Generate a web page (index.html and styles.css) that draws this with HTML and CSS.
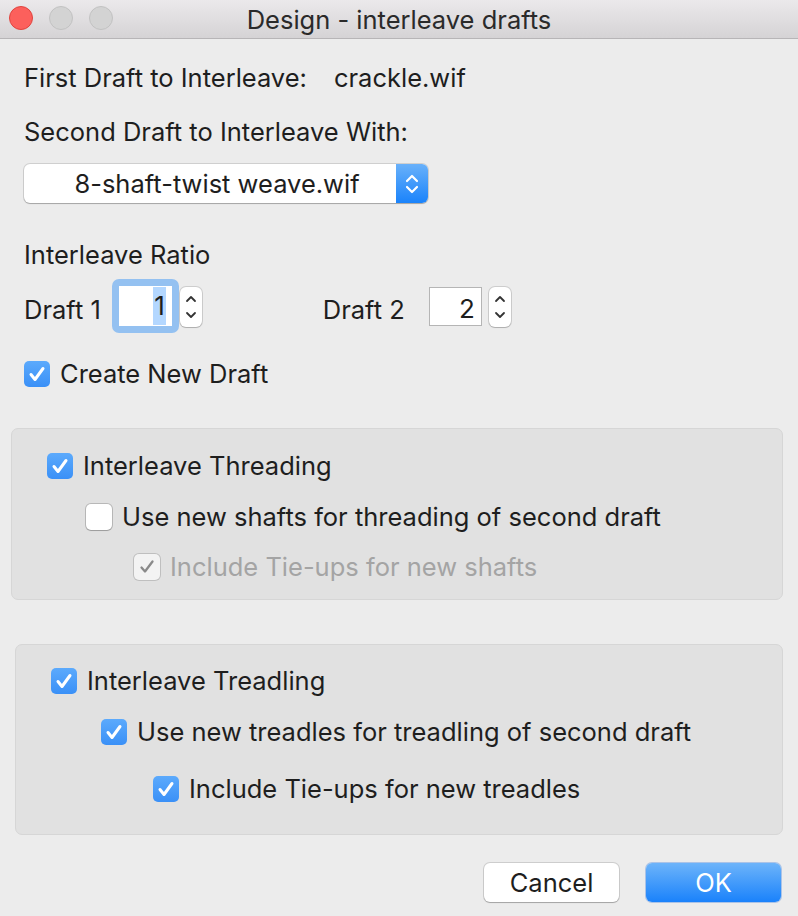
FILE: index.html
```html
<!DOCTYPE html>
<html>
<head>
<meta charset="utf-8">
<link rel="stylesheet" href="styles.css">
</head>
<body>
<div class="window">
  <div class="titlebar">
    <div class="lights">
      <span class="light red"></span>
      <span class="light gray"></span>
      <span class="light gray"></span>
    </div>
    <div class="title">Design - interleave drafts</div>
  </div>
  <div class="content">
    <div class="row first">
      <span class="first-label">First Draft to Interleave:</span>
      <span class="first-value">crackle.wif</span>
    </div>
    <div class="row second">Second Draft to Interleave With:</div>
    <div class="popup">
      <span class="popup-text">8-shaft-twist weave.wif</span>
      <span class="popup-arrows">
        <svg width="16" height="24" viewBox="0 0 16 24"><path d="M3 9 L8 4 L13 9 M3 15 L8 20 L13 15" fill="none" stroke="#fff" stroke-width="2.2" stroke-linecap="round" stroke-linejoin="round"/></svg>
      </span>
    </div>
    <div class="row ratio-label">Interleave Ratio</div>
    <div class="ratio">
      <span class="ratio-text">Draft 1</span>
      <span class="focus-ring"><span class="field focused"><span class="sel">1</span></span></span>
      <span class="stepper">
        <svg width="14" height="32" viewBox="0 0 14 32"><path d="M3 10 L7 6 L11 10 M3 22 L7 26 L11 22" fill="none" stroke="#333" stroke-width="1.8" stroke-linecap="round" stroke-linejoin="round"/></svg>
      </span>
      <span class="ratio-text d2">Draft 2</span>
      <span class="field plain">2</span>
      <span class="stepper s2">
        <svg width="14" height="32" viewBox="0 0 14 32"><path d="M3 10 L7 6 L11 10 M3 22 L7 26 L11 22" fill="none" stroke="#333" stroke-width="1.8" stroke-linecap="round" stroke-linejoin="round"/></svg>
      </span>
    </div>
    <div class="row check-row create">
      <span class="cb on"><svg width="20" height="18" viewBox="0 0 20 18"><path d="M4 9.5 L8 14.5 L16 3.5" fill="none" stroke="#fff" stroke-width="3" stroke-linecap="round" stroke-linejoin="round"/></svg></span>
      <span>Create New Draft</span>
    </div>

    <div class="group g1">
      <div class="row check-row">
        <span class="cb on"><svg width="20" height="18" viewBox="0 0 20 18"><path d="M4 9.5 L8 14.5 L16 3.5" fill="none" stroke="#fff" stroke-width="3" stroke-linecap="round" stroke-linejoin="round"/></svg></span>
        <span>Interleave Threading</span>
      </div>
      <div class="row check-row g1-r2">
        <span class="cb off"></span>
        <span>Use new shafts for threading of second draft</span>
      </div>
      <div class="row check-row g1-r3 disabled">
        <span class="cb dis"><svg width="20" height="18" viewBox="0 0 20 18"><path d="M4.5 9.5 L8 13.5 L15.5 3.5" fill="none" stroke="#8a8a8a" stroke-width="2.3" stroke-linecap="round" stroke-linejoin="round"/></svg></span>
        <span>Include Tie-ups for new shafts</span>
      </div>
    </div>

    <div class="group g2">
      <div class="row check-row">
        <span class="cb on"><svg width="20" height="18" viewBox="0 0 20 18"><path d="M4 9.5 L8 14.5 L16 3.5" fill="none" stroke="#fff" stroke-width="3" stroke-linecap="round" stroke-linejoin="round"/></svg></span>
        <span>Interleave Treadling</span>
      </div>
      <div class="row check-row g2-r2">
        <span class="cb on"><svg width="20" height="18" viewBox="0 0 20 18"><path d="M4 9.5 L8 14.5 L16 3.5" fill="none" stroke="#fff" stroke-width="3" stroke-linecap="round" stroke-linejoin="round"/></svg></span>
        <span>Use new treadles for treadling of second draft</span>
      </div>
      <div class="row check-row g2-r3">
        <span class="cb on"><svg width="20" height="18" viewBox="0 0 20 18"><path d="M4 9.5 L8 14.5 L16 3.5" fill="none" stroke="#fff" stroke-width="3" stroke-linecap="round" stroke-linejoin="round"/></svg></span>
        <span>Include Tie-ups for new treadles</span>
      </div>
    </div>

    <div class="buttons">
      <button class="btn cancel">Cancel</button>
      <button class="btn ok">OK</button>
    </div>
  </div>
</div>
</body>
</html>
```
FILE: styles.css
```css
* { box-sizing: border-box; }
html, body { margin: 0; padding: 0; }
body {
  width: 798px;
  height: 916px;
  background: #ececec;
  font-family: Inter, "Noto Sans", "Liberation Sans", sans-serif;
  font-size: 25.5px;
  color: #1e1e1e;
  overflow: hidden;
}
.window { width: 798px; height: 916px; background: #ececec; }
.titlebar {
  position: relative;
  height: 39px;
  background: linear-gradient(#ebe9eb, #d5d3d5);
  border-bottom: 1px solid #b7b5b7;
  display: flex;
  align-items: center;
  justify-content: center;
}
.lights {
  position: absolute;
  left: 9px;
  top: 6px;
  display: flex;
  gap: 16px;
}
.light {
  width: 24px; height: 24px; border-radius: 50%;
  display: block;
}
.light.red { background: #fc605c; border: 1px solid #e0443e; }
.light.gray { background: #d3d3d3; border: 1px solid #c2c2c2; }
.title { font-size: 25.5px; color: #2a2a2a; padding-top: 1px; }

.content { padding: 0 15px 0 24px; display: flex; flex-direction: column; }
.row { height: 30px; line-height: 30px; white-space: nowrap; }
.first { margin-top: 24px; display: flex; }
.first-value { margin-left: 27px; }
.second { margin-top: 24px; }
.popup {
  margin-top: 17px;
  width: 404px;
  height: 39px;
  background: #fff;
  border-radius: 6px;
  box-shadow: 0 0 0 1px rgba(0,0,0,0.12), 0 1px 1px rgba(0,0,0,0.2);
  display: flex;
  overflow: hidden;
}
.popup-text { flex: 1; text-align: center; line-height: 39px; padding-left: 14px; }
.popup-arrows {
  width: 32px;
  background: linear-gradient(#69b1fa, #1a83fb);
  display: flex; align-items: center; justify-content: center;
}
.ratio-label { margin-top: 37px; }
.ratio { margin-top: 9px; height: 54px; display: flex; align-items: center; }
.ratio-text { padding-top: 6px; }
.focus-ring {
  margin-left: 11px;
  width: 67px; height: 54px;
  background: #94c1f1;
  border-radius: 7px;
  padding: 7px;
  display: flex;
  flex: none;
}
.field {
  background: #fff;
  display: flex; align-items: center; justify-content: flex-end;
  font-size: 26px;
  flex: none;
}
.field.focused { width: 53px; height: 40px; padding-right: 6px; }
.sel { background: #b3d7ff; padding: 0 1px; line-height: 38px; }
.field.plain {
  margin-left: 24px;
  width: 53px; height: 39px;
  border: 1px solid #b5b5b5;
  padding-right: 6px;
  padding-top: 5px;
}
.stepper {
  width: 22px; height: 40px;
  background: #fff;
  border-radius: 6px;
  box-shadow: 0 0 0 1px rgba(0,0,0,0.13), 0 1px 1px rgba(0,0,0,0.15);
  display: flex; align-items: center; justify-content: center;
  margin-left: 1px;
  margin-top: 2px;
  flex: none;
}
.stepper.s2 { margin-left: 7px; }
.d2 { margin-left: 121px; }

.check-row { display: flex; align-items: center; }
.cb {
  width: 26px; height: 26px;
  border-radius: 5px;
  margin-right: 10px;
  display: flex; align-items: center; justify-content: center;
  flex: none;
}
.cb.on { background: linear-gradient(#5caafc, #3a90f7); }
.cb.off { background: #fff; box-shadow: 0 0 0 1px rgba(0,0,0,0.18), 0 1px 1px rgba(0,0,0,0.15); }
.cb.dis { background: #f3f3f3; box-shadow: 0 0 0 1px rgba(0,0,0,0.15); }
.disabled { color: #a4a4a4; }
.create { margin-top: 26px; }

.group {
  background: #e1e1e1;
  border: 1px solid #d6d6d6;
  border-radius: 7px;
  display: flex; flex-direction: column;
}
.g1 {
  margin-top: 39px;
  margin-left: -13px;
  height: 172px;
  padding: 22px 0 0 35px;
}
.g1-r2 { margin-top: 21px; margin-left: 39px; }
.g1-r3 { margin-top: 20px; margin-left: 87px; }
.g2 {
  margin-top: 44px;
  margin-left: -9px;
  height: 191px;
  padding: 21px 0 0 35px;
}
.g2-r2 { margin-top: 21px; margin-left: 50px; }
.g2-r3 { margin-top: 27px; margin-left: 102px; }

.buttons { margin-top: 28px; display: flex; justify-content: flex-end; gap: 27px; padding-right: 2px; }
.btn {
  width: 135px; height: 39px;
  border: none;
  border-radius: 6px;
  font-family: inherit;
  font-size: 25.5px;
  padding: 0;
}
.cancel { background: #fff; color: #1e1e1e; box-shadow: 0 0 0 1px rgba(0,0,0,0.13), 0 1px 1px rgba(0,0,0,0.2); }
.ok { background: linear-gradient(#6db4fa, #1a82fb); color: #fff; box-shadow: 0 0 0 1px rgba(20,100,220,0.3); }
```
